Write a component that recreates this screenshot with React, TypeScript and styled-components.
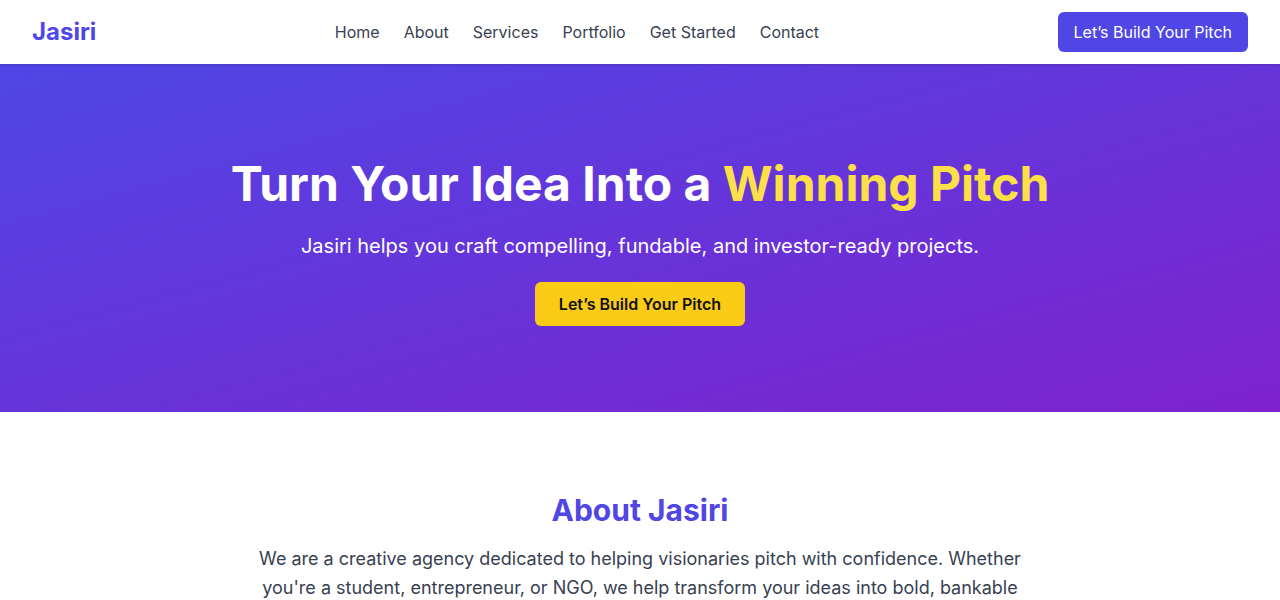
import React from "react";
import styled, { createGlobalStyle } from "styled-components";

const Global = createGlobalStyle`
  * { box-sizing: border-box; }
  body { margin: 0; font-family: Inter, "Noto Sans", sans-serif; background: #fff; color: #1f2937; }
`;

const Header = styled.header`
  height: 64px;
  display: flex;
  align-items: center;
  justify-content: space-between;
  padding: 0 32px;
  background: #fff;
  box-shadow: 0 1px 3px rgba(0,0,0,0.1), 0 1px 2px rgba(0,0,0,0.06);
  position: relative;
  z-index: 1;
`;

const Logo = styled.div`
  font-size: 24px;
  line-height: 32px;
  font-weight: 700;
  color: #4f46e5;
`;

const Nav = styled.nav`
  display: flex;
  gap: 24px;
`;

const NavLink = styled.a`
  font-size: 16px;
  line-height: 24px;
  color: #374151;
  text-decoration: none;
`;

const Button = styled.a<{ $variant: "primary" | "accent" }>`
  display: inline-block;
  text-decoration: none;
  border-radius: 6px;
  font-size: 16px;
  ${(p) =>
    p.$variant === "primary"
      ? `background:#4f46e5;color:#fff;padding:8px 16px;line-height:24px;font-weight:400;`
      : `background:#facc15;color:#111;padding:12px 24px;line-height:20px;font-weight:600;`}
`;

const Hero = styled.section`
  height: 348px;
  background: linear-gradient(to bottom right, #4f46e5, #7e22ce);
  display: flex;
  flex-direction: column;
  align-items: center;
  padding-top: 96px;
  text-align: center;
`;

const Title = styled.h1`
  margin: 0 0 24px;
  font-size: 48px;
  line-height: 48px;
  font-weight: 700;
  color: #fff;
`;

const Highlight = styled.span`
  color: #fde047;
`;

const Subtitle = styled.p`
  margin: 0 0 22px;
  font-size: 20px;
  line-height: 28px;
  color: #fff;
`;

const About = styled.section`
  padding: 80px 16px;
  display: flex;
  flex-direction: column;
  align-items: center;
  text-align: center;
`;

const SectionTitle = styled.h2`
  margin: 0 0 16px;
  font-size: 30px;
  line-height: 36px;
  font-weight: 700;
  color: #4f46e5;
`;

const Paragraph = styled.p`
  margin: 0;
  max-width: 768px;
  font-size: 18px;
  line-height: 29px;
  color: #374151;
`;

export default function App() {
  const links = ["Home", "About", "Services", "Portfolio", "Get Started", "Contact"];
  return (
    <>
      <Global />
      <Header>
        <Logo>Jasiri</Logo>
        <Nav>
          {links.map((l) => (
            <NavLink key={l} href="#">{l}</NavLink>
          ))}
        </Nav>
        <Button $variant="primary" href="#">Let’s Build Your Pitch</Button>
      </Header>
      <Hero>
        <Title>
          Turn Your Idea Into a <Highlight>Winning Pitch</Highlight>
        </Title>
        <Subtitle>Jasiri helps you craft compelling, fundable, and investor-ready projects.</Subtitle>
        <Button $variant="accent" href="#">Let’s Build Your Pitch</Button>
      </Hero>
      <About>
        <SectionTitle>About Jasiri</SectionTitle>
        <Paragraph>
          We are a creative agency dedicated to helping visionaries pitch with confidence. Whether
          you're a student, entrepreneur, or NGO, we help transform your ideas into bold, bankable
          projects that attract funding and partners.
        </Paragraph>
      </About>
    </>
  );
}
